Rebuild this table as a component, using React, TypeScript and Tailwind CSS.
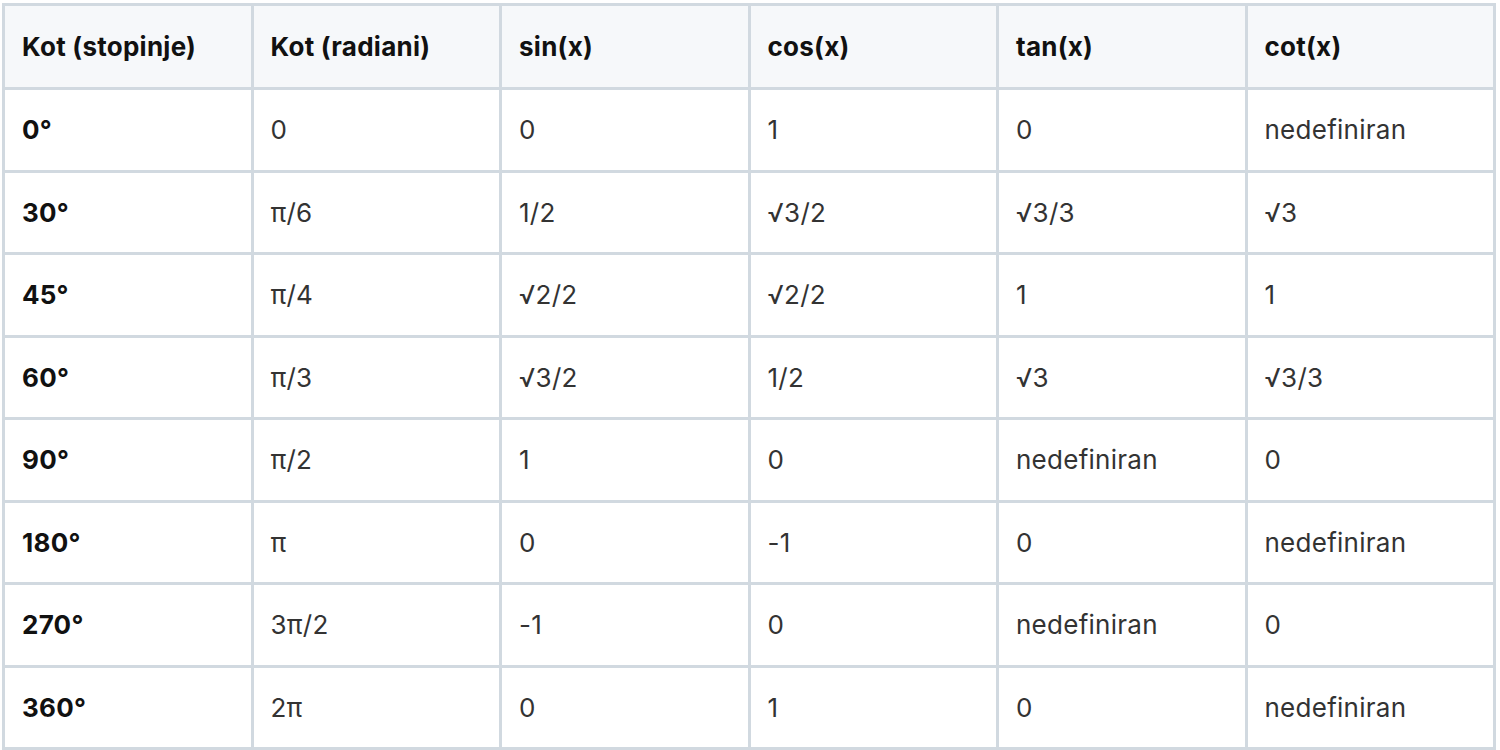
import React from "react";

const headers = ["Kot (stopinje)", "Kot (radiani)", "sin(x)", "cos(x)", "tan(x)", "cot(x)"];

const rows: string[][] = [
  ["0°", "0", "0", "1", "0", "nedefiniran"],
  ["30°", "π/6", "1/2", "√3/2", "√3/3", "√3"],
  ["45°", "π/4", "√2/2", "√2/2", "1", "1"],
  ["60°", "π/3", "√3/2", "1/2", "√3", "√3/3"],
  ["90°", "π/2", "1", "0", "nedefiniran", "0"],
  ["180°", "π", "0", "-1", "0", "nedefiniran"],
  ["270°", "3π/2", "-1", "0", "nedefiniran", "0"],
  ["360°", "2π", "0", "1", "0", "nedefiniran"],
];

export default function App() {
  return (
    <div className="w-[1500px] h-[750px] bg-white pt-[3px] pl-[2px] font-['Inter','Liberation_Sans',sans-serif]">
      <table className="w-[1494px] table-fixed border-collapse text-[26px] tracking-[0.01em]">
        <thead>
          <tr className="h-[84px] bg-[#f6f8fa]">
            {headers.map((h) => (
              <th
                key={h}
                className="border-[3px] border-[#d1d9e0] px-[17px] text-left font-bold text-[#111111]"
              >
                {h}
              </th>
            ))}
          </tr>
        </thead>
        <tbody>
          {rows.map((r) => (
            <tr key={r[0]} className="h-[82.5px]">
              {r.map((c, i) => (
                <td
                  key={i}
                  className={
                    "border-[3px] border-[#d1d9e0] px-[17px] text-left " +
                    (i === 0 ? "font-bold text-[#111111]" : "text-[#333333]")
                  }
                >
                  {c}
                </td>
              ))}
            </tr>
          ))}
        </tbody>
      </table>
    </div>
  );
}
